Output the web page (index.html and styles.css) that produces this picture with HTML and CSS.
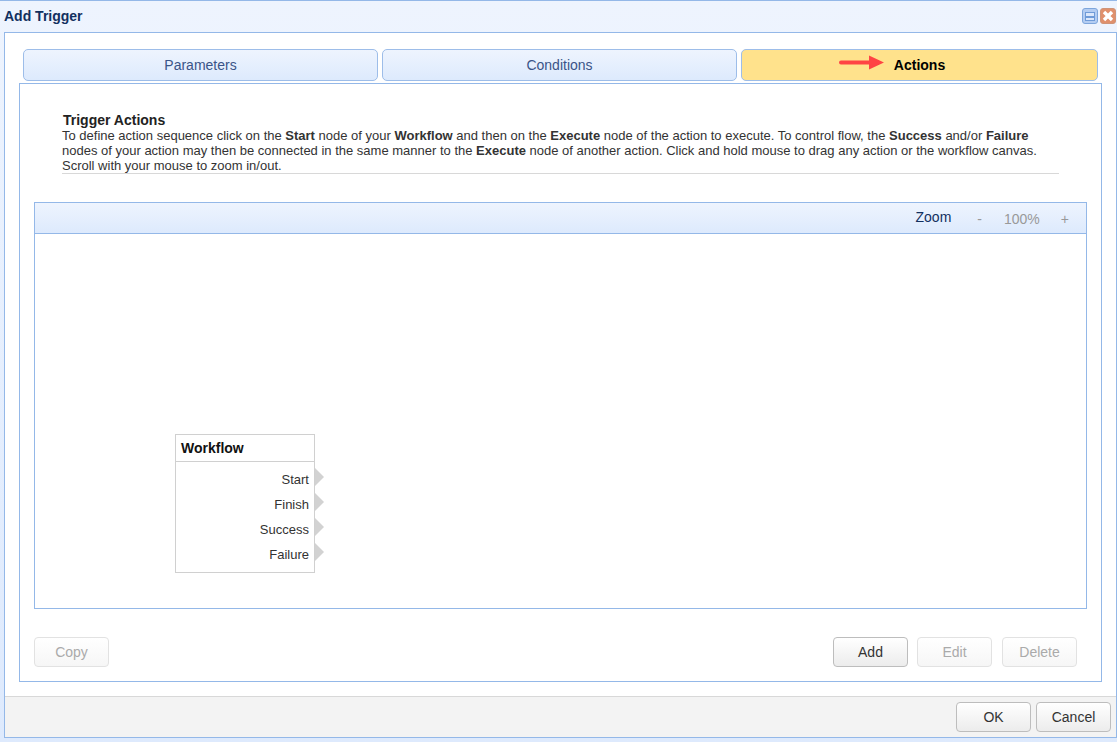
FILE: index.html
```html
<!DOCTYPE html>
<html lang="en">
<head>
<meta charset="utf-8">
<title>Add Trigger</title>
<link rel="stylesheet" href="styles.css">
</head>
<body>
<div class="window">
  <header class="titlebar">
    <span class="title">Add Trigger</span>
    <div class="win-controls">
      <button class="win-btn win-min"><span class="min-glyph"></span></button>
      <button class="win-btn win-close">
        <svg width="12" height="12" viewBox="0 0 12 12"><path d="M2 2 L10 10 M10 2 L2 10" stroke="#fff" stroke-width="3.4" fill="none"/></svg>
      </button>
    </div>
  </header>
  <div class="dialog">
    <main class="body">
      <nav class="tabs">
        <div class="tab">Parameters</div>
        <div class="tab">Conditions</div>
        <div class="tab tab-active">
          <svg class="arrow" width="46" height="16" viewBox="0 0 46 16"><path d="M2 5.5 H30 V0.5 L45 7.5 L30 14.5 V9.5 H2 A2 2 0 0 1 2 5.5 Z" fill="#ff4444"/></svg>
          <span>Actions</span>
        </div>
      </nav>
      <section class="panel">
        <div class="intro">
          <h3 class="intro-title">Trigger Actions</h3>
          <p class="intro-text">To define action sequence click on the <b>Start</b> node of your <b>Workflow</b> and then on the <b>Execute</b> node of the action to execute. To control flow, the <b>Success</b> and/or <b>Failure</b> nodes of your action may then be connected in the same manner to the <b>Execute</b> node of another action. Click and hold mouse to drag any action or the workflow canvas. Scroll with your mouse to zoom in/out.</p>
        </div>
        <div class="workflow">
          <div class="toolbar">
            <span class="zoom-label">Zoom</span>
            <span class="zoom-ctl zoom-minus">-</span>
            <span class="zoom-ctl zoom-val">100%</span>
            <span class="zoom-ctl zoom-plus">+</span>
          </div>
          <div class="canvas">
            <div class="node">
              <div class="node-head">Workflow</div>
              <div class="node-row">Start<i class="port"></i></div>
              <div class="node-row">Finish<i class="port"></i></div>
              <div class="node-row">Success<i class="port"></i></div>
              <div class="node-row">Failure<i class="port"></i></div>
            </div>
          </div>
        </div>
        <div class="actions">
          <button class="btn" disabled>Copy</button>
          <div class="actions-right">
            <button class="btn">Add</button>
            <button class="btn" disabled>Edit</button>
            <button class="btn" disabled>Delete</button>
          </div>
        </div>
      </section>
    </main>
    <footer class="footer">
      <button class="btn">OK</button>
      <button class="btn">Cancel</button>
    </footer>
  </div>
</div>
</body>
</html>
```

FILE: styles.css
```css
* { box-sizing: border-box; }
html, body { margin: 0; height: 100%; }
body {
  font-family: "Liberation Sans", Arial, sans-serif;
  font-size: 14px;
  background: #deeafd;
  overflow: hidden;
}
.window {
  height: 742px;
  display: flex;
  flex-direction: column;
  border-top: 1px solid #94b8e8;
  background: linear-gradient(#eef4fe, #deeafd);
  padding: 0 0 4px 4px;
}
.titlebar {
  height: 31px;
  flex: none;
  display: flex;
  align-items: center;
  justify-content: space-between;
  padding: 0 1px 1px 0;
}
.title {
  font-weight: bold;
  font-size: 14px;
  color: #12305f;
}
.win-controls { display: flex; gap: 2px; }
.win-btn {
  width: 16px;
  height: 16px;
  padding: 0;
  border-radius: 3px;
  display: flex;
  align-items: center;
  justify-content: center;
  border: 1px solid #7ea6dc;
  background: #b4cdf2;
}
.win-close { background: #e0906c; border-color: #cf9478; }
.min-glyph {
  display: block;
  width: 10px;
  height: 9px;
  border: 1px solid #6f9bd8;
  background: linear-gradient(#dce8fb 0 3px, #6f9bd8 3px 5px, #dce8fb 5px);
}
.dialog {
  flex: 1;
  display: flex;
  flex-direction: column;
  background: #fff;
  border: 1px solid #94b8e8;
  min-height: 0;
}
.body {
  height: 663px;
  flex: none;
  padding: 16px 14px 0;
}
.tabs {
  display: flex;
  gap: 4px;
  padding: 0 4px;
}
.tab {
  flex: 355 1 0;
  position: relative;
  height: 32px;
  display: flex;
  align-items: center;
  justify-content: center;
  border: 1px solid #9dbde9;
  border-radius: 5px;
  background: linear-gradient(#eef4fe, #ddeafd);
  color: #3a5488;
  font-size: 14px;
}
.tab-active {
  flex-grow: 357;
  background: #ffe28c;
  color: #000;
  font-weight: bold;
}
.arrow {
  position: absolute;
  left: 97px;
  top: 5px;
  display: block;
}
.panel {
  margin-top: 2px;
  height: 599px;
  border: 1px solid #94b8e8;
  display: flex;
  flex-direction: column;
  padding: 0 14px;
}
.intro {
  margin: 29px 28px 0 28px;
  height: 61px;
  border-bottom: 1px solid #d8d8d8;
}
.intro-title {
  margin: 0;
  padding-left: 1px;
  font-size: 14px;
  line-height: 15px;
  color: #222;
  font-weight: bold;
}
.intro-text {
  margin: 0;
  font-size: 13px;
  line-height: 15px;
  color: #333;
}
.workflow {
  margin-top: 28px;
  height: 407px;
  border: 1px solid #94b8e8;
  display: flex;
  flex-direction: column;
}
.toolbar {
  height: 31px;
  flex: none;
  display: flex;
  align-items: center;
  justify-content: flex-end;
  border-bottom: 1px solid #94b8e8;
  background: linear-gradient(#eef4fe, #ddeafd);
  padding-right: 17px;
}
.zoom-label { color: #12305f; margin-top: -2px; margin-right: 26px; }
.zoom-ctl { color: #999; margin-top: 2px; }
.zoom-val { margin-left: 22px; margin-right: 21px; }
.canvas { position: relative; flex: 1; background: #fff; }
.node {
  position: absolute;
  left: 140px;
  top: 200px;
  width: 140px;
  height: 139px;
  border: 1px solid #d0d0d0;
  background: #fff;
}
.node-head {
  height: 27px;
  border-bottom: 1px solid #d0d0d0;
  font-weight: bold;
  color: #111;
  line-height: 26px;
  padding-left: 5px;
  margin-bottom: 5px;
}
.node-row {
  position: relative;
  height: 25px;
  line-height: 25px;
  font-size: 13px;
  text-align: right;
  padding-right: 5px;
  color: #333;
}
.port {
  position: absolute;
  right: -10px;
  top: 1px;
  width: 0;
  height: 0;
  border-top: 9px solid transparent;
  border-bottom: 9px solid transparent;
  border-left: 9px solid #d2d2d2;
}
.actions {
  margin-top: 28px;
  display: flex;
  justify-content: space-between;
  padding-right: 10px;
}
.actions-right { display: flex; gap: 9px; }
.actions-right .btn:last-child { margin-left: 1px; }
.btn {
  width: 75px;
  height: 30px;
  padding: 0;
  border: 1px solid #bdbdbd;
  border-radius: 4px;
  background: linear-gradient(#ffffff, #ececec);
  color: #333;
  font-family: inherit;
  font-size: 14px;
}
.btn:disabled {
  border-color: #e2e2e2;
  background: linear-gradient(#ffffff, #f6f6f6);
  color: #aaa;
}
.footer {
  flex: 1;
  display: flex;
  justify-content: flex-end;
  gap: 5px;
  padding: 5px 5px 0 0;
  background: #f3f3f3;
  border-top: 1px solid #d8d8d8;
}
```
